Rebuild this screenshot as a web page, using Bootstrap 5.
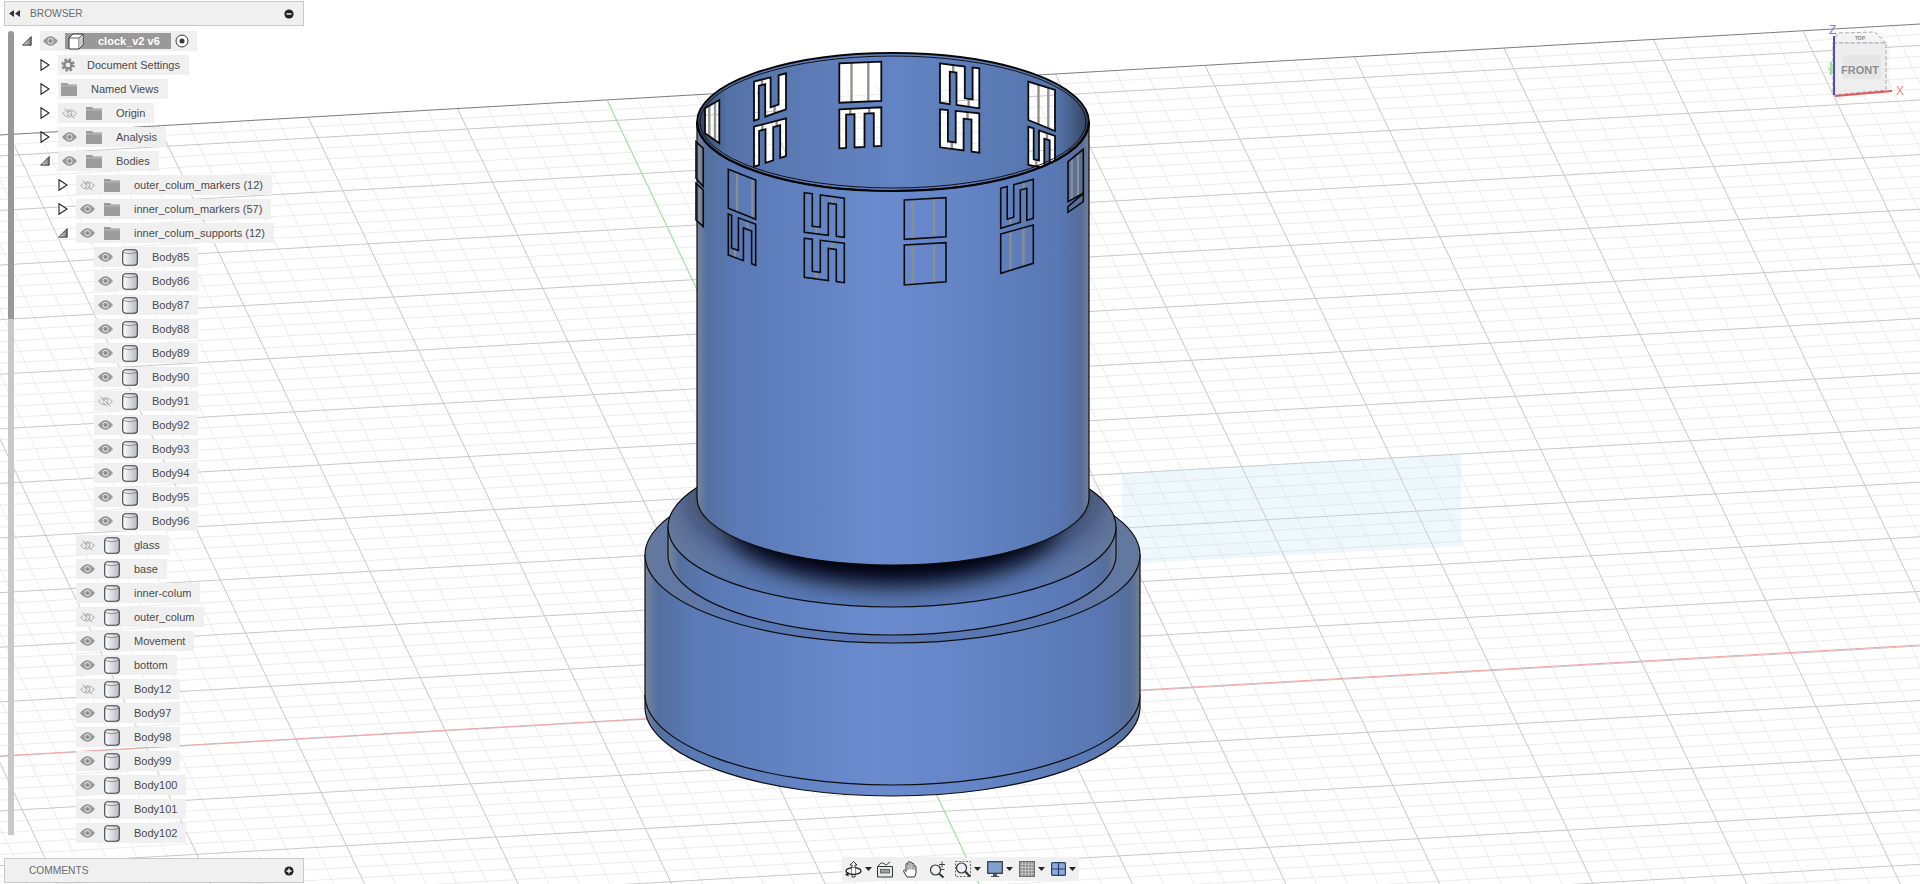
<!DOCTYPE html>
<html>

<head>
  <meta charset="utf-8">
  <title>clock_v2 v6</title>
  <link href="https://cdn.jsdelivr.net/npm/bootstrap@5.3.2/dist/css/bootstrap.min.css" rel="stylesheet" type="text/css" />
  <style>
    body { width: 1920px; height: 884px; overflow: hidden; background: #fff; font-family: "Liberation Sans", Arial, sans-serif; font-size: 11px; color: #4a4a4a; }
    .scene { width: 1920px; height: 884px; }
    .side-panel { width: 304px; height: 884px; left: 4px; top: 1px; pointer-events: none; }
    .panel-bar { height: 25px; width: 300px; background: #f0f0f0; border: 1px solid #c9c9c9; padding: 0 9px 0 4px; color: #6b6b6b; }
    .panel-title { margin-left: 10px; font-size: 10.2px; }
    .bar-spacer { flex-grow: 1; }
    .scroll-track { left: 4px; top: 30px; width: 6px; height: 804px; background: #c8c8c8; border-radius: 3px 3px 0 0; }
    .scroll-thumb { height: 288px; background: #989898; border-radius: 3px 3px 0 0; }
    .tree { margin-left: -4px; margin-top: 3px; height: 816px; }
    .tree-row { height: 24px; }
    .pill { height: 20px; background: #f0f0f0; padding-right: 9px; white-space: nowrap; }
    .twisty { width: 18px; padding-right: 8px; }
    .slot-eye { width: 15px; margin: 0 9px 0 4px; }
    .slot-icon { width: 16px; margin-right: 14px; }
    .no-eye .slot-icon { margin-left: 3px; }
    .no-eye .slot-gear { width: 14px; margin-right: 12px; }
    .root-twisty { margin-left: 22px; }
    .root-eye { width: 15px; margin-left: 3px; }
    .root-box { height: 16px; width: 106px; background: #999; color: #fff; font-weight: 700; margin-left: 7px; padding-left: 3px; }
    .root-box span { margin-left: 14px; }
    .comments-bar { left: 4px; top: 858px; }
    .toolstrip { left: 842px; top: 857px; width: 237px; height: 24px; background: #f0f0f0; padding-left: 3px; }
    .ml5 { margin-left: 5px; }
    .ml10 { margin-left: 10px; }
    .ml9 { margin-left: 9px; }
    .ml6 { margin-left: 6px; }
    .caret-down { width: 7px; height: 4px; margin-left: 3px; background: #222; clip-path: polygon(0 0, 100% 0, 50% 100%); }
  </style>
</head>

<body>
  <svg class="scene position-absolute top-0 start-0" viewBox="0 0 1920 884" xmlns="http://www.w3.org/2000/svg">
    <defs>
      <linearGradient id="wall" x1="0" x2="1" y1="0" y2="0">
        <stop offset="0" stop-color="#78869c" />
        <stop offset=".025" stop-color="#55709f" />
        <stop offset=".1" stop-color="#5a79b6" />
        <stop offset=".38" stop-color="#6687c8" />
        <stop offset=".46" stop-color="#6b8bcf" />
        <stop offset=".68" stop-color="#6384c5" />
        <stop offset=".92" stop-color="#5877b3" />
        <stop offset=".98" stop-color="#566e9a" />
        <stop offset="1" stop-color="#727f96" />
      </linearGradient>
      <linearGradient id="inner" x1="0" x2="1" y1="0" y2="0">
        <stop offset="0" stop-color="#344360" />
        <stop offset=".08" stop-color="#5572a8" />
        <stop offset=".5" stop-color="#6384c4" />
        <stop offset=".92" stop-color="#5574aa" />
        <stop offset="1" stop-color="#344360" />
      </linearGradient>
      <linearGradient id="ledge" x1="0" x2="1" y1="0" y2="0">
        <stop offset="0" stop-color="#65789c" />
        <stop offset=".2" stop-color="#5877b3" />
        <stop offset=".8" stop-color="#5877b3" />
        <stop offset="1" stop-color="#65789c" />
      </linearGradient>
      <filter id="soft" x="-30%" y="-60%" width="160%" height="220%">
        <feGaussianBlur stdDeviation="11" />
      </filter>
      <filter id="softWide" x="-30%" y="-60%" width="160%" height="220%">
        <feGaussianBlur stdDeviation="16" />
      </filter>
      <filter id="cubeShadow" x="-30%" y="-30%" width="160%" height="160%">
        <feGaussianBlur stdDeviation="3" />
      </filter>
      <clipPath id="ledgeClip">
        <ellipse cx="892" cy="527" rx="224" ry="80" />
      </clipPath>
      <clipPath id="backClip"></clipPath>
    </defs>

    <g id="grid" fill="none"></g>
    <polygon points="1122,473 1461,454 1461,546 1122,564" fill="#bfe3f5" fill-opacity=".28" />
    <line x1="0" y1="135" x2="1920" y2="24" stroke="#7c7c7c" />
    <line x1="0" y1="756" x2="1920" y2="645" stroke="#f7a3a3" />
    <line x1="607" y1="100" x2="979" y2="884" stroke="#96ea96" />

    <!-- base -->
    <g stroke="#0c0c0c" stroke-width="1.2">
      <path d="M645 695V707A247.5 89 0 0 0 1140 707V695Z" fill="url(#wall)" />
      <path d="M645 555V695A247.5 90 0 0 0 1140 695V555Z" fill="url(#wall)" />
      <ellipse cx="892.5" cy="555" rx="247.5" ry="88" fill="url(#ledge)" />
      <path d="M668 527V555A224 80 0 0 0 1116 555V527Z" fill="url(#wall)" />
      <ellipse cx="892" cy="527" rx="224" ry="80" fill="url(#ledge)" />
    </g>
    <g clip-path="url(#ledgeClip)">
      <ellipse cx="893" cy="500" rx="205" ry="70" fill="#0a1020" opacity=".55" filter="url(#softWide)" />
      <ellipse cx="893" cy="522" rx="165" ry="62" fill="#02040a" filter="url(#soft)" />
    </g>

    <!-- column -->
    <ellipse cx="893" cy="122" rx="196" ry="69" fill="url(#inner)" />
    <g id="backWins"></g>
    <g id="backGrid" clip-path="url(#backClip)"></g>
    <g id="backRods"></g>
    <ellipse cx="893" cy="122" rx="193" ry="66" fill="none" stroke="#111" />
    <ellipse cx="893" cy="122" rx="196" ry="69" fill="none" stroke="#050505" stroke-width="1.8" />
    <path d="M697 122A196 69 0 0 0 1089 122V498A196 67 0 0 1 697 498Z" fill="url(#wall)" stroke="#0c0c0c" stroke-width="1.2" />
    <path d="M697 122A196 69 0 0 0 1089 122" fill="none" stroke="#050505" stroke-width="2.2" />
    <g id="frontWins"></g>

    <!-- view cube -->
    <g>
      <rect x="1835" y="42" width="52" height="50" fill="#999" opacity=".18" filter="url(#cubeShadow)" />
      <polygon points="1833,43 1838,33 1875,32 1886,43" fill="#f4f4f4" stroke="#aaa" stroke-dasharray="4 2" />
      <polygon points="1833,43 1886,43 1886,90 1833,95" fill="#eeeeee" stroke="#aaa" stroke-dasharray="4 2" />
      <rect x="1843" y="55" width="38" height="24" fill="#e6e6e6" />
      <text x="1860" y="74" font-size="11" font-weight="700" fill="#8a9096" text-anchor="middle">FRONT</text>
      <text x="1860" y="40" font-size="5" font-weight="700" fill="#888" text-anchor="middle">TOP</text>
      <line x1="1831" y1="62" x2="1831" y2="75" stroke="#97ea97" stroke-width="2" />
      <text x="1827" y="75" font-size="11" fill="#8fe08f">Y</text>
      <line x1="1834" y1="95" x2="1834" y2="36" stroke="#4a4ad8" stroke-width="2" />
      <line x1="1835" y1="96" x2="1892" y2="91" stroke="#e85555" stroke-width="2" />
      <text x="1829" y="34" font-size="12" fill="#7c7ce8">Z</text>
      <text x="1896" y="95" font-size="12" fill="#f48888">X</text>
    </g>
  </svg>

  <!-- tree icons -->
  <svg width="0" height="0" class="position-absolute">
    <symbol id="i-eye" viewBox="0 0 15 10">
      <path d="M0 5Q7.5-4.5 15 5Q7.5 14.5 0 5Z" fill="#999" />
      <circle cx="7.5" cy="5" r="3" fill="#e4e4e4" />
      <circle cx="7.5" cy="5" r="2.1" fill="#8c8c8c" />
    </symbol>
    <symbol id="i-eye-off" viewBox="0 0 15 11">
      <path d="M.5 5.5Q7.5-2 14.5 5.5Q7.5 13 .5 5.5Z" fill="none" stroke="#aaa" />
      <circle cx="7.5" cy="5.5" r="2.4" fill="none" stroke="#aaa" />
      <path d="M2.5.5L12.5 10.5" stroke="#aaa" />
      <path d="M1.5 1.5L11.5 11" stroke="#f0f0f0" />
    </symbol>
    <symbol id="i-folder" viewBox="0 0 16 13">
      <path d="M0 0H6L7.5 1.5H16V13H0Z" fill="#9c9c9c" />
      <path d="M0 3H16" stroke="#c4c4c4" stroke-width=".8" />
    </symbol>
    <symbol id="i-gear" viewBox="0 0 14 14">
      <circle cx="7" cy="7" r="3.6" fill="none" stroke="#8a8a8a" stroke-width="2.6" />
      <circle cx="7" cy="7" r="5.6" fill="none" stroke="#8a8a8a" stroke-width="2.4" stroke-dasharray="2.4 2" />
    </symbol>
    <linearGradient id="cylFill" x1="0" x2="1" y1="0" y2="0">
      <stop offset="0" stop-color="#fff" />
      <stop offset="1" stop-color="#b4b8c0" />
    </linearGradient>
    <symbol id="i-body" viewBox="0 0 16 17">
      <rect x=".7" y=".7" width="14.6" height="15.6" rx="3" fill="url(#cylFill)" stroke="#3c404a" stroke-width="1.1" />
      <path d="M1 3.5Q8 6 15 3.5" fill="none" stroke="#6c7078" stroke-width=".7" />
    </symbol>
    <symbol id="i-comp" viewBox="0 0 16 17">
      <path d="M1 5L5 1H15V12L11 16H1Z" fill="#fff" stroke="#333" />
      <path d="M11 5H1M11 5L15 1M11 5V16" fill="none" stroke="#333" stroke-width=".8" />
      <path d="M11.4 5.4L14.6 2V11.7L11.4 15.2Z" fill="#c9ccd1" />
    </symbol>
  </svg>

  <div class="side-panel position-absolute">
    <div class="panel-bar d-flex align-items-center">
      <svg width="11" height="7" viewBox="0 0 11 7"><path d="M5 0V7L0 3.5ZM11 0V7L6 3.5Z" fill="#333" /></svg>
      <span class="panel-title">BROWSER</span>
      <span class="bar-spacer"></span>
      <svg width="10" height="10" viewBox="0 0 10 10"><circle cx="5" cy="5" r="4.6" fill="#222" /><path d="M2.5 5H7.5" stroke="#fff" stroke-width="1.4" /></svg>
    </div>
    <div class="scroll-track position-absolute"><div class="scroll-thumb"></div></div>
    <div id="tree" class="tree d-flex flex-column"></div>
  </div>

  <div class="panel-bar comments-bar position-absolute d-flex align-items-center">
    <span class="panel-title ms-3 ps-1">COMMENTS</span>
    <span class="bar-spacer"></span>
    <svg width="10" height="10" viewBox="0 0 10 10"><circle cx="5" cy="5" r="4.6" fill="#222" /><path d="M2.5 5H7.5M5 2.5V7.5" stroke="#fff" stroke-width="1.3" /></svg>
  </div>

  <div class="toolstrip position-absolute d-flex align-items-center">
    <svg width="17" height="17" viewBox="0 0 17 17">
      <path d="M7 16V4H5L8.5 .5L12 4H10V16Z" fill="#fff" stroke="#222" stroke-width=".9" />
      <ellipse cx="8.5" cy="10" rx="7.5" ry="3.4" fill="none" stroke="#222" stroke-width="1.3" />
      <path d="M7 6.5V13H10V6.5" fill="#fff" />
      <path d="M7 13.3H10" stroke="#222" stroke-width="1.3" />
      <path d="M3.5 11L0 13.5L3.5 15.5Z" fill="#222" />
    </svg>
    <span class="caret-down"></span>
    <svg class="ml5" width="16" height="17" viewBox="0 0 16 17">
      <path d="M.5 5.5H15.5V16H.5Z" fill="#e8e8e8" stroke="#333" />
      <rect x="3.5" y="8.5" width="9" height="3.5" fill="#9aa0a8" stroke="#444" stroke-width=".7" />
      <path d="M1 5L4 2H6L9 4L13 1" fill="none" stroke="#444" />
    </svg>
    <svg class="ml10" width="16" height="17" viewBox="0 0 16 17">
      <path d="M4 16C2 13 .5 10.5 .5 9.5C1 8.5 2 8.8 3 10.5V3.5C3 2.2 4.8 2.2 4.9 3.5V1.5C5 .2 6.9 .2 7 1.5V1.8C7.2 .8 9 .8 9.1 2.2V3C9.5 2 11 2.2 11 3.5V5.5C11.500 4.6 13 4.8 13 6V11C13 13 12 15 11.5 16Z" fill="#fff" stroke="#222" stroke-width=".9" />
      <path d="M4.9 3.5V9M7 2V8.5M9.1 3V8.5M11 5.5V9" stroke="#222" stroke-width=".7" />
    </svg>
    <svg class="ml10" width="17" height="17" viewBox="0 0 17 17">
      <circle cx="6.5" cy="9" r="5" fill="#eef2f6" stroke="#333" stroke-width="1.2" />
      <path d="M10.2 12.7L14.5 16.5" stroke="#333" stroke-width="2" />
      <path d="M10 3.5H16M13 .5V6.5M11 8.500H15.500" stroke="#333" stroke-width=".9" />
    </svg>
    <svg class="ml9" width="16" height="17" viewBox="0 0 16 17">
      <rect x=".5" y=".5" width="15" height="15" fill="none" stroke="#666" stroke-dasharray="2 1.5" />
      <circle cx="6.5" cy="7" r="5" fill="#eef2f6" stroke="#333" stroke-width="1.2" />
      <path d="M10.2 10.5L15 15.5" stroke="#333" stroke-width="2" />
    </svg>
    <span class="caret-down"></span>
    <svg class="ml6" width="16" height="17" viewBox="0 0 16 17">
      <rect x=".7" y=".7" width="14.6" height="11.6" fill="#7fa0d0" stroke="#333" stroke-width="1.2" />
      <path d="M6 13V15H4V16H12V15H10V13Z" fill="#555" />
    </svg>
    <span class="caret-down"></span>
    <svg class="ml6" width="16" height="16" viewBox="0 0 16 16">
      <rect width="16" height="16" fill="#8e8e8e" />
      <path d="M3.2 0V16M6.4 0V16M9.6 0V16M12.8 0V16M0 3.2H16M0 6.4H16M0 9.6H16M0 12.8H16" stroke="#d8d8d8" stroke-width=".7" />
      <rect x=".4" y=".4" width="15.2" height="15.2" fill="none" stroke="#666" stroke-width=".8" />
    </svg>
    <span class="caret-down"></span>
    <svg class="ml6" width="15" height="14" viewBox="0 0 15 14">
      <rect x=".6" y=".6" width="13.8" height="12.8" rx="1" fill="#8eaadb" stroke="#26406e" stroke-width="1.2" />
      <path d="M7.5 1V13M1 7H14" stroke="#26406e" stroke-width="1.2" />
    </svg>
    <span class="caret-down"></span>
  </div>

  <script>
    // ---- ground grid, the view is close enough to affine to skip perspective
    const ox = 894, oy = 705
    const ex = 149.5, ey = -8.6
    const fx = 25.2, fy = 53.15
    const vTop = -11.38
    const pt = (u, v) => [ox + u * ex + v * fx, oy + u * ey + v * fy]

    function seg(a, b) {
      return `M${a[0].toFixed(1)} ${a[1].toFixed(1)}L${b[0].toFixed(1)} ${b[1].toFixed(1)}`
    }

    let minor = '', major = ''
    for (let i = -90; i <= 90; i++) {
      const d = seg(pt(i / 5, vTop), pt(i / 5, 6))
      if (i % 5 === 0) major += d; else minor += d
    }
    for (let j = Math.ceil(vTop * 5); j <= 30; j++) {
      const d = seg(pt(-20, j / 5), pt(20, j / 5))
      if (j % 5 === 0) major += d; else minor += d
    }
    const gridLines = `<path d="${minor}" stroke="#ececec" /><path d="${major}" stroke="#c8c8c8" />`
    document.querySelector('#grid').innerHTML = gridLines

    // ---- digit windows cut in the column, coordinates taken from a 3x crop at 660,30
    const toPage = p => [660 + p[0] / 3, 30 + p[1] / 3]
    const mix = (a, b, t) => [a[0] + (b[0] - a[0]) * t, a[1] + (b[1] - a[1]) * t]
    const at = (q, s, t) => mix(mix(q[0], q[1], s), mix(q[3], q[2], s), t)

    function windowPath(q, notches) {
      const pts = [q[0]]
      notches.filter(n => n[2] === 't').forEach(n => {
        pts.push(at(q, n[0], 0), at(q, n[0], n[3]), at(q, n[1], n[3]), at(q, n[1], 0))
      })
      pts.push(q[1], q[2])
      notches.filter(n => n[2] === 'b').reverse().forEach(n => {
        pts.push(at(q, n[1], 1), at(q, n[1], n[3]), at(q, n[0], n[3]), at(q, n[0], 1))
      })
      pts.push(q[3])
      return 'M' + pts.map(p => toPage(p).map(v => v.toFixed(1)).join(' ')).join('L') + 'Z'
    }

    function rodLines(q, notches, rods) {
      let d = ''
      rods.forEach(s => { d += seg(toPage(at(q, s, 0)), toPage(at(q, s, 1))) })
      notches.forEach(n => {
        const s = (n[0] + n[1]) / 2
        d += seg(toPage(at(q, s, n[3])), toPage(at(q, s, n[2] === 't' ? 1 : 0)))
      })
      return d
    }

    const two = [[.15, .35, 'b', .14], [.52, .77, 't', .8]]
    const twoB = [[.25, .42, 'b', .18], [.63, .83, 't', .8]]
    const five = [[.2, .4, 't', .82], [.6, .8, 'b', .18]]
    const three = [[.16, .36, 'b', .14], [.6, .82, 'b', .14]]
    const fiveLeft = [[.12, .37, 't', .8], [.55, .85, 'b', .2]]
    const bars = [.2, .72]

    const back = [
      [[[282, 155], [378, 130], [378, 238], [282, 272]], two, []],
      [[[282, 290], [378, 265], [378, 378], [282, 410]], three, []],
      [[[538, 100], [664, 95], [664, 213], [538, 218]], [], [.29, .69]],
      [[[538, 238], [664, 232], [664, 348], [538, 355]], three, []],
      [[[840, 100], [958, 115], [958, 235], [840, 218]], twoB, []],
      [[[840, 238], [958, 250], [958, 368], [840, 352]], five, []],
      [[[1105, 155], [1185, 180], [1185, 303], [1105, 270]], [], [.38, .75]],
      [[[1105, 290], [1185, 318], [1185, 420], [1105, 405]], five, []],
      [[[135, 235], [178, 210], [178, 340], [135, 310]], [], [.3, .7]]
    ]
    const front = [
      [[[205, 418], [287, 450], [287, 568], [205, 535]], [], [.32, .88]],
      [[[205, 552], [287, 583], [287, 706], [205, 675]], fiveLeft, []],
      [[[433, 488], [553, 505], [553, 622], [433, 607]], five, []],
      [[[433, 625], [553, 640], [553, 758], [433, 742]], five, []],
      [[[733, 510], [858, 503], [858, 620], [733, 628]], [], bars],
      [[[733, 645], [858, 638], [858, 755], [733, 765]], [], bars],
      [[[1022, 475], [1120, 448], [1120, 565], [1022, 595]], five, []],
      [[[1022, 612], [1120, 585], [1120, 700], [1022, 730]], [], [.3, .7]],
      [[[1224, 395], [1270, 358], [1270, 490], [1224, 515]], [], [.25, .65]],
      [[[1224, 530], [1270, 490], [1270, 515], [1224, 547]], [], []],
      [[[108, 335], [130, 355], [130, 470], [108, 445]], [], [.5]],
      [[[108, 460], [130, 480], [130, 590], [108, 570]], [], [.5]]
    ]

    let backFill = '', backLines = '', clip = '', backRod = ''
    back.forEach(w => {
      const d = windowPath(w[0], w[1])
      backFill += `<path d="${d}" fill="#fff" />`
      clip += `<path d="${d}" />`
      backLines += `<path d="${d}" fill="none" stroke="#0a0a0a" stroke-width="1.8" />`
      backRod += `<path d="${rodLines(w[0], w[1], w[2])}" stroke="#93938f" stroke-width="2.4" />`
    })
    document.querySelector('#backWins').innerHTML = backFill
    document.querySelector('#backClip').innerHTML = clip
    document.querySelector('#backGrid').innerHTML = `<g fill="none">${gridLines}</g>`
    document.querySelector('#backRods').innerHTML = backRod + backLines

    let frontMarkup = ''
    front.forEach(w => {
      const d = windowPath(w[0], w[1])
      frontMarkup += `<path d="${rodLines(w[0], w[1], w[2])}" stroke="#8f8f8a" stroke-width="2.2" />`
      frontMarkup += `<path d="${d}" fill="none" stroke="#0a0a0a" stroke-width="1.6" />`
    })
    document.querySelector('#frontWins').innerHTML = frontMarkup

    // ---- browser tree
    const rows = [
      { lvl: 1, arrow: 'right', icon: 'gear', text: 'Document Settings' },
      { lvl: 1, arrow: 'right', icon: 'folder', text: 'Named Views' },
      { lvl: 1, arrow: 'right', eye: 'off', icon: 'folder', text: 'Origin' },
      { lvl: 1, arrow: 'right', eye: 'on', icon: 'folder', text: 'Analysis' },
      { lvl: 1, arrow: 'down', eye: 'on', icon: 'folder', text: 'Bodies' },
      { lvl: 2, arrow: 'right', eye: 'off', icon: 'folder', text: 'outer_colum_markers (12)' },
      { lvl: 2, arrow: 'right', eye: 'on', icon: 'folder', text: 'inner_colum_markers (57)' },
      { lvl: 2, arrow: 'down', eye: 'on', icon: 'folder', text: 'inner_colum_supports (12)' }
    ]
    for (let n = 85; n <= 96; n++) {
      rows.push({ lvl: 3, eye: n === 91 ? 'off' : 'on', icon: 'body', text: 'Body' + n })
    }
    const hidden = ['glass', 'outer_colum', 'Body12']
    const parts = ['glass', 'base', 'inner-colum', 'outer_colum', 'Movement', 'bottom', 'Body12', 'Body97', 'Body98', 'Body99', 'Body100', 'Body101', 'Body102']
    parts.forEach(name => {
      rows.push({ lvl: 2, eye: hidden.includes(name) ? 'off' : 'on', icon: 'body', text: name })
    })

    const arrowRight = '<svg width="10" height="12" viewBox="0 0 10 12"><path d="M1 .7L9 6L1 11.3Z" fill="#fff" stroke="#222" stroke-width="1.1" /></svg>'
    const arrowDown = '<svg width="12" height="12" viewBox="0 0 12 12"><linearGradient id="tw" x1="0" x2="1" y1="0" y2="0"><stop offset="0" stop-color="#eee" /><stop offset="1" stop-color="#777" /></linearGradient><path d="M11 .7V11H.7Z" fill="url(#tw)" stroke="#222" /></svg>'
    const useIcon = (id, w, h) => `<svg width="${w}" height="${h}"><use href="#i-${id}" /></svg>`
    const iconSize = { folder: [16, 13], gear: [14, 14], body: [16, 17] }
    const indent = { 1: 40, 2: 58, 3: 76 }

    const tree = document.querySelector('#tree')

    const rootRow = document.createElement('div')
    rootRow.className = 'tree-row d-flex align-items-center'
    rootRow.innerHTML = `<span class="root-twisty d-flex justify-content-end twisty">${arrowDown}</span>
      <span class="pill d-flex align-items-center pe-2">
        <span class="root-eye d-flex">${useIcon('eye', 15, 10)}</span>
        <span class="root-box d-flex align-items-center">${useIcon('comp', 16, 17)}<span>clock_v2 v6</span></span>
        <svg class="ms-1" width="14" height="14" viewBox="0 0 14 14"><circle cx="7" cy="7" r="6" fill="#fff" stroke="#333" /><circle cx="7" cy="7" r="2.5" fill="#333" /></svg>
      </span>`
    tree.appendChild(rootRow)

    rows.forEach(r => {
      const row = document.createElement('div')
      row.className = 'tree-row d-flex align-items-center'
      const twisty = r.arrow === 'right' ? arrowRight : r.arrow === 'down' ? arrowDown : ''
      const eye = r.eye ? `<span class="slot-eye d-flex">${useIcon(r.eye === 'on' ? 'eye' : 'eye-off', 15, r.eye === 'on' ? 10 : 11)}</span>` : ''
      const size = iconSize[r.icon]
      row.innerHTML = `<span class="d-flex justify-content-end twisty">${twisty}</span>
        <span class="pill d-flex align-items-center ${r.eye ? '' : 'no-eye'}">${eye}
          <span class="slot-icon ${r.icon === 'gear' ? 'slot-gear' : ''} d-flex">${useIcon(r.icon, size[0], size[1])}</span>
          <span>${r.text}</span>
        </span>`
      row.querySelector('.twisty').style.marginLeft = indent[r.lvl] + 'px'
      tree.appendChild(row)
    })
  </script>
  <script src="https://cdn.jsdelivr.net/npm/bootstrap@5.3.2/dist/js/bootstrap.bundle.min.js"></script>
</body>

</html>
